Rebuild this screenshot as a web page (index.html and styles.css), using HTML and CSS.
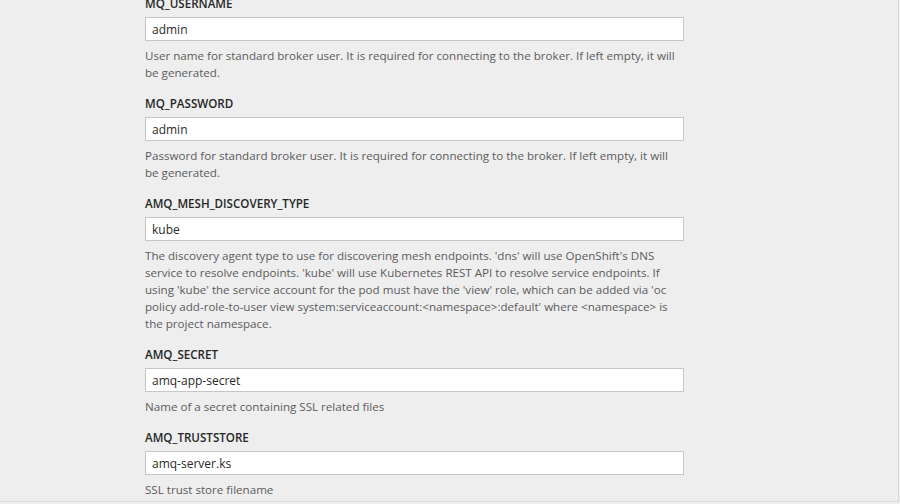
FILE: index.html
```html
<!DOCTYPE html>
<html>
<head>
<meta charset="utf-8">
<link rel="stylesheet" href="styles.css">
</head>
<body>
<div class="page">
  <form class="form">
    <div class="field">
      <label class="label">MQ_USERNAME</label>
      <input class="input" type="text" value="admin">
      <p class="help">User name for standard broker user. It is required for connecting to the broker. If left empty, it will be generated.</p>
    </div>
    <div class="field">
      <label class="label">MQ_PASSWORD</label>
      <input class="input" type="text" value="admin">
      <p class="help">Password for standard broker user. It is required for connecting to the broker. If left empty, it will be generated.</p>
    </div>
    <div class="field">
      <label class="label">AMQ_MESH_DISCOVERY_TYPE</label>
      <input class="input" type="text" value="kube">
      <p class="help">The discovery agent type to use for discovering mesh endpoints. 'dns' will use OpenShift's DNS service to resolve endpoints. 'kube' will use Kubernetes REST API to resolve service endpoints. If using 'kube' the service account for the pod must have the 'view' role, which can be added via 'oc policy add-role-to-user view system:serviceaccount:&lt;namespace&gt;:default' where &lt;namespace&gt; is the project namespace.</p>
    </div>
    <div class="field">
      <label class="label">AMQ_SECRET</label>
      <input class="input" type="text" value="amq-app-secret">
      <p class="help">Name of a secret containing SSL related files</p>
    </div>
    <div class="field">
      <label class="label">AMQ_TRUSTSTORE</label>
      <input class="input" type="text" value="amq-server.ks">
      <p class="help">SSL trust store filename</p>
    </div>
  </form>
</div>
</body>
</html>
```
FILE: styles.css
```css
html, body {
  margin: 0;
  padding: 0;
  background: #eeeeee;
  overflow: hidden;
}
.page {
  width: 898px;
  height: 501px;
  border-right: 1px solid #d8d8d8;
  border-bottom: 1px solid #dcdcdc;
  overflow: hidden;
  font-family: "Open Sans", "Liberation Sans", sans-serif;
}
.form {
  margin: -4px 0 0 145px;
  width: 539px;
}
.field {
  display: flex;
  flex-direction: column;
  margin-bottom: 15px;
}
.label {
  display: block;
  font-size: 11.6px;
  font-weight: 600;
  line-height: 16px;
  color: #262626;
  margin-bottom: 5px;
}
.input {
  box-sizing: border-box;
  height: 24px;
  width: 539px;
  margin: 0;
  padding: 0 6px;
  border: 1px solid #c6c6c6;
  background: #ffffff;
  font-family: "Open Sans", "Liberation Sans", sans-serif;
  font-size: 12px;
  color: #2a2a2a;
  outline: none;
}
.help {
  margin: 6px 0 0;
  font-size: 11.6px;
  line-height: 17px;
  color: #5c5c5c;
}
```
